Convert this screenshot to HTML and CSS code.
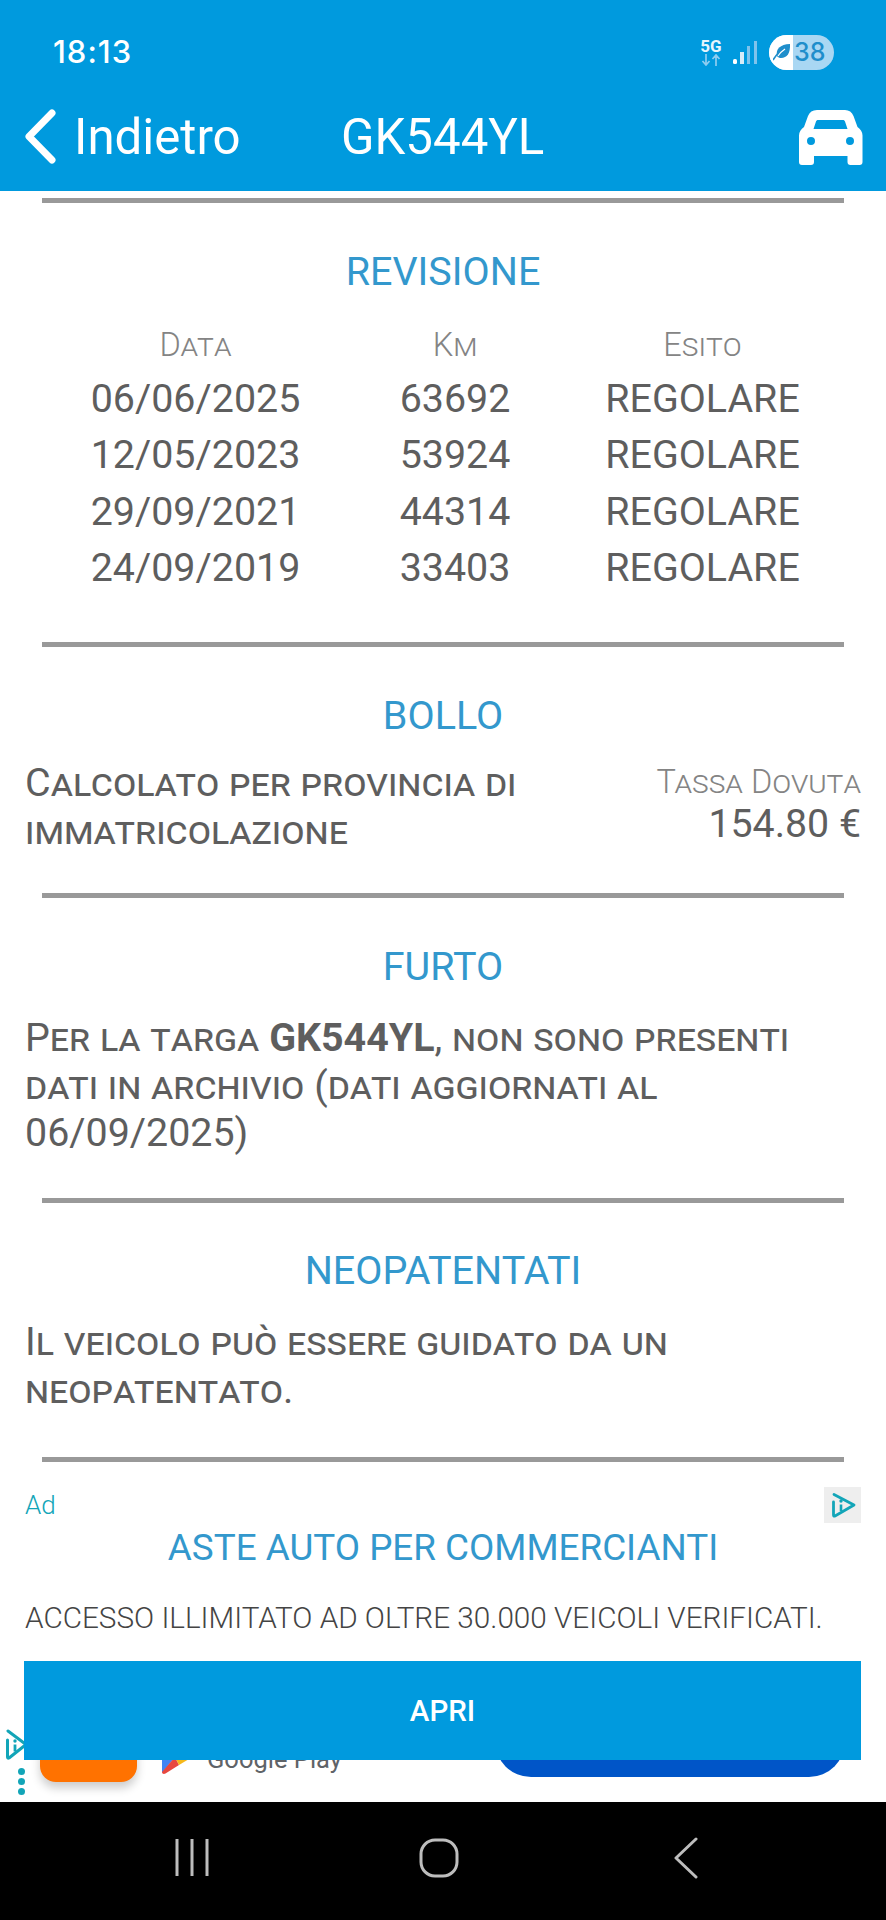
FILE: index.html
```html
<!DOCTYPE html>
<html lang="it">
<head>
<meta charset="utf-8">
<title>GK544YL</title>
<link rel="stylesheet" href="styles.css">
</head>
<body>
<div class="phone">
  <header class="top">
    <div class="status">
      <span class="clock">18:13</span>
      <div class="status-icons">
        <div class="net"><span class="net-label">5G</span>
          <svg class="net-arrows" width="20" height="12" viewBox="0 0 20 12"><path d="M5 0v11M1.500 7l3.500 4 3.500-4M15 12V1M11.500 5L15 1l3.500 4" fill="none" stroke="#8fcdf0" stroke-width="1.700"/></svg>
        </div>
        <svg class="signal" width="24" height="23" viewBox="0 0 24 23"><rect x="0" y="18" width="4" height="5" rx="1.500" fill="#fff"/><rect x="7" y="11" width="4" height="12" fill="#d6ecf9"/><rect x="14" y="5" width="3" height="18" fill="#7fc3ec"/><rect x="21" y="0" width="3" height="23" fill="#7fc3ec"/></svg>
        <div class="battery">
          <div class="batt-leaf"><svg width="18" height="18" viewBox="0 0 18 18"><path d="M4 13C2.500 6 7 1.500 17 1c.5 9-3 14-9 14-1.500 0-3-.5-4-2z" fill="#1f8ecb"/><path d="M0 17c3-5 6-8 10-10" fill="none" stroke="#1f8ecb" stroke-width="1.600"/><path d="M5 13c2-3 4-5 7-7" fill="none" stroke="#fff" stroke-width="1.300"/></svg></div>
          <span class="batt-num">38</span>
        </div>
      </div>
    </div>
    <div class="appbar">
      <div class="back">
        <svg width="36" height="58" viewBox="0 0 36 58"><path d="M30 5L7 28.500 30 52" fill="none" stroke="#fff" stroke-width="7" stroke-linecap="round" stroke-linejoin="round"/></svg>
        <span>Indietro</span>
      </div>
      <div class="plate">GK544YL</div>
      <svg class="car" width="64" height="55" viewBox="0 0 64 55"><path fill-rule="evenodd" d="M18 0h28c4 0 7 2 8.500 6l4 11c3 2 5 5 5 8.500V52a3 3 0 0 1-3 3h-9a3 3 0 0 1-3-3v-6H15v6a3 3 0 0 1-3 3H3a3 3 0 0 1-3-3V25.500c0-3.500 2-6.500 5-8.500l4-11c1.500-4 4.500-6 9-6zM19 10c-1 0-1.500.5-2 1.500L14.500 19h34L46 11.500c-.5-1-1-1.500-2-1.500zM12 27a4 4 0 1 0 0 8 4 4 0 0 0 0-8zM51 27a4 4 0 1 0 0 8 4 4 0 0 0 0-8z" fill="#fff"/></svg>
    </div>
  </header>

  <main class="content">
    <hr class="rule rule-first">
    <section class="section sec-rev">
      <h2 class="title">REVISIONE</h2>
      <div class="table">
        <div class="row head"><span>Data</span><span>Km</span><span>Esito</span></div>
        <div class="row"><span>06/06/2025</span><span>63692</span><span>REGOLARE</span></div>
        <div class="row"><span>12/05/2023</span><span>53924</span><span>REGOLARE</span></div>
        <div class="row"><span>29/09/2021</span><span>44314</span><span>REGOLARE</span></div>
        <div class="row"><span>24/09/2019</span><span>33403</span><span>REGOLARE</span></div>
      </div>
    </section>
    <hr class="rule">
    <section class="section sec-bollo">
      <h2 class="title">BOLLO</h2>
      <div class="bollo">
        <p class="para bollo-text">Calcolato per provincia di immatricolazione</p>
        <div class="tax"><span class="tax-label">Tassa Dovuta</span><span class="tax-value">154.80 €</span></div>
      </div>
    </section>
    <hr class="rule">
    <section class="section sec-furto">
      <h2 class="title">FURTO</h2>
      <p class="para">Per la targa <b>GK544YL</b>, non sono presenti dati in archivio (dati aggiornati al 06/09/2025)</p>
    </section>
    <hr class="rule">
    <section class="section sec-neo">
      <h2 class="title">NEOPATENTATI</h2>
      <p class="para">Il veicolo può essere guidato da un neopatentato.</p>
    </section>
    <hr class="rule">
  </main>

  <aside class="ad">
    <div class="ad-top">
      <span class="ad-label">Ad</span>
      <div class="ad-choice"><svg width="26" height="28" viewBox="0 0 26 28"><path d="M4 3.500L24 14 5 25c-1 .5-1.500 0-1.500-1V11" fill="none" stroke="#12a5b8" stroke-width="2.800" stroke-linejoin="round" stroke-linecap="round"/><circle cx="11" cy="10" r="1.700" fill="#12a5b8"/><path d="M11 13.500V20" stroke="#12a5b8" stroke-width="2.600"/></svg></div>
    </div>
    <h3 class="ad-title">ASTE AUTO PER COMMERCIANTI</h3>
    <p class="ad-text">ACCESSO ILLIMITATO AD OLTRE 30.000 VEICOLI VERIFICATI.</p>
    <div class="ad-under">
      <div class="ad-side">
        <svg width="22" height="33" viewBox="0 0 22 33"><path d="M3 3L21 16.500 4 30c-1 .5-1.500 0-1.500-1V12" fill="none" stroke="#12a5b8" stroke-width="3" stroke-linejoin="round" stroke-linecap="round"/><circle cx="10" cy="13" r="1.700" fill="#12a5b8"/><path d="M10 16.500v7" stroke="#12a5b8" stroke-width="2.800"/></svg>
        <div class="dots"><i></i><i></i><i></i></div>
      </div>
      <div class="orange"></div>
      <svg class="gplay" width="28" height="42" viewBox="0 0 28 42"><path d="M1 0l13 24L1 40z" fill="#4285f4"/><path d="M1 39c0 2 2 2.500 3.500 1.500L18 32 14 24z" fill="#e8483f"/><path d="M14 24h14v2l-10 6z" fill="#f6b81a"/></svg>
      <span class="gplay-text">Google Play</span>
      <div class="blue"></div>
      <button class="open" type="button">APRI</button>
    </div>
  </aside>

  <nav class="navbar">
    <svg width="38" height="38" viewBox="0 0 38 38"><path d="M5 0v37M20 0v37M35 0v37" stroke="#bdbdbd" stroke-width="3"/></svg>
    <svg width="40" height="40" viewBox="0 0 40 40"><rect x="2" y="2" width="36" height="36" rx="14" fill="none" stroke="#bdbdbd" stroke-width="3"/></svg>
    <svg width="32" height="42" viewBox="0 0 32 42"><path d="M28 2L8 21l20 19" fill="none" stroke="#bdbdbd" stroke-width="3" stroke-linecap="round" stroke-linejoin="round"/></svg>
  </nav>
</div>
</body>
</html>
```
FILE: styles.css
```css
* { box-sizing: border-box; }
html, body { margin: 0; padding: 0; background: #fff; }
body { font-family: Roboto, "Liberation Sans", sans-serif; }
.phone { width: 886px; height: 1920px; display: flex; flex-direction: column; overflow: hidden; }

.top { height: 191px; background: #009ade; color: #fff; flex: none; }
.status { display: flex; justify-content: space-between; align-items: center; padding: 34px 52px 0 53px; height: 70px; }
.clock { font-size: 31px; font-weight: 500; letter-spacing: 1px; font-family: Inter, Roboto, sans-serif; margin-top: -2px; }
.status-icons { display: flex; align-items: center; gap: 12px; }
.net { display: flex; flex-direction: column; align-items: center; width: 20px; }
.net-label { font-size: 17px; line-height: 14px; font-weight: 700; color: #e8f5fc; }
.net-arrows { margin-top: 1px; }
.battery { width: 65px; height: 35px; border-radius: 18px; background: #a9d7f3; overflow: hidden; display: flex; align-items: center; }
.batt-leaf { width: 24px; height: 35px; background: #fff; display: flex; align-items: center; justify-content: flex-end; flex: none; padding-right: 2px; }
.batt-num { color: #1f8ecb; font-size: 25px; font-family: Inter, Roboto, sans-serif; font-weight: 500; line-height: 35px; margin-left: 1px; }

.appbar { height: 121px; display: grid; grid-template-columns: 319px 1fr auto; align-items: center; padding: 12px 23px 0 22px; }
.back { display: flex; align-items: center; gap: 16px; font-size: 49.200px; font-weight: 400; }
.plate { font-size: 49.200px; font-weight: 400; }
.car { margin-top: 1px; }

.content { flex: none; display: flex; flex-direction: column; color: #5e5e5e; }
.rule { height: 5px; margin: 0 42px; border: 0; background: #999; flex: none; }
.rule-first { margin-top: 7px; }
.section { display: flex; flex-direction: column; padding: 47px 25px 0; flex: none; }
.title { margin: 0; text-align: center; font-size: 39.500px; font-weight: 400; color: #3398cd; line-height: 44px; }

.sec-rev { height: 439px; }
.table { margin-top: 31px; }
.row { display: grid; grid-template-columns: 341px 178px 1fr; text-align: center; font-size: 39.400px; font-weight: 400; height: 56.300px; line-height: 56.300px; color: #5e5e5e; width: 836px; }
.row.head { font-size: 32.500px; font-weight: 300; font-variant: small-caps; color: #848484; height: 46px; line-height: 41px; }

.sec-bollo { height: 246px; }
.bollo { display: flex; justify-content: space-between; align-items: flex-start; margin-top: 21px; }
.para { margin: 0; font-size: 39.400px; font-weight: 400; line-height: 47.500px; font-variant: small-caps; color: #5e5e5e; }
.bollo-text { width: 560px; line-height: 48px; }
.tax { display: flex; flex-direction: column; align-items: flex-end; padding-top: 5px; }
.tax-label { font-size: 32.500px; line-height: 36px; font-variant: small-caps; color: #848484; font-weight: 300; }
.tax-value { font-size: 39.300px; font-weight: 400; line-height: 48px; color: #5e5e5e; }

.sec-furto { height: 300px; }
.sec-furto .para { margin-top: 25px; }
.sec-neo { height: 254px; padding-top: 46px; }
.sec-neo .para { margin-top: 25px; }

.ad { height: 340px; flex: none; background: #fff; }
.ad-top { display: flex; justify-content: space-between; padding: 28px 25px 0; height: 64px; }
.ad-label { font-size: 26px; font-weight: 300; color: #12a5b8; line-height: 30px; }
.ad-choice { width: 37px; height: 36px; margin-top: -3px; background: #eee; display: flex; align-items: center; justify-content: center; }
.ad-title { margin: 0; text-align: center; font-size: 36.800px; font-weight: 400; color: #3398cd; line-height: 44px; }
.ad-text { margin: 30px 0 0 25px; font-size: 29.700px; font-weight: 300; color: #444; line-height: 36px; white-space: nowrap; }
.ad-under { position: relative; height: 141px; margin-top: 25px; overflow: hidden; }
.open { position: absolute; left: 24px; top: 0; width: 837px; height: 99px; border: 0; border-radius: 0; background: #009ade; color: #fff; font-family: Roboto, sans-serif; font-size: 29.500px; font-weight: 500; }
.ad-side { position: absolute; left: 5px; top: 67px; display: flex; flex-direction: column; align-items: center; }
.dots { display: flex; flex-direction: column; gap: 3px; margin-top: 7px; margin-left: 10px; }
.dots i { display: block; width: 7px; height: 7px; border-radius: 50%; background: #12a5b8; }
.orange { position: absolute; left: 40px; top: 60px; width: 97px; height: 61px; background: #ff7200; border-radius: 16px; box-shadow: 0 6px 10px rgba(0,0,0,.2); }
.gplay { position: absolute; left: 161px; top: 72px; }
.gplay-text { position: absolute; left: 207px; top: 78px; font-size: 25.500px; line-height: 40px; color: #5f6368; }
.blue { position: absolute; left: 495px; top: 40px; width: 350px; height: 76px; background: #0055c8; border-radius: 36px; }

.navbar { height: 118px; flex: none; background: #000; display: flex; align-items: center; padding: 0 0 6px 172px; gap: 209px; }
```
